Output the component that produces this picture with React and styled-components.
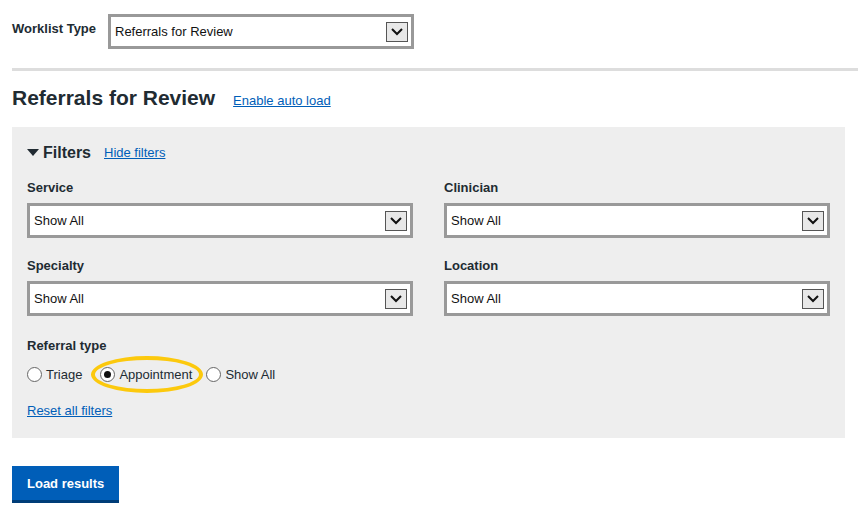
import React from 'react';
import styled, { createGlobalStyle } from 'styled-components';

const Global = createGlobalStyle`
  body { margin: 0; font-family: "Liberation Sans", Arial, sans-serif; color: #212b32; background: #fff; }
`;

const Page = styled.div`
  padding: 14px 0 0 12px;
  width: 846px;
`;

const TopRow = styled.div`
  display: flex;
  align-items: flex-start;
  gap: 12px;
  padding-bottom: 19px;
  border-bottom: 3px solid #ddd;
`;

const TopLabel = styled.div`
  font-size: 13px;
  font-weight: bold;
  padding-top: 7px;
  width: 84px;
  white-space: nowrap;
`;

const SelectBox = styled.div`
  box-sizing: border-box;
  width: ${p => p.$w}px;
  height: 35px;
  border: 3px solid #999;
  background: #fff;
  display: flex;
  align-items: center;
  justify-content: space-between;
  padding: 0 3px 0 4px;
  font-size: 13px;
  color: #111;
`;

const Arrow = styled.span`
  box-sizing: border-box;
  width: 22px;
  height: 20px;
  border: 1px solid #555;
  background: #e8e8e8;
  display: flex;
  align-items: center;
  justify-content: center;
`;

const HeadRow = styled.div`
  display: flex;
  align-items: baseline;
  gap: 18px;
  margin: 15px 0 17px;
`;

const H1 = styled.h1`
  margin: 0;
  font-size: 21px;
  font-weight: bold;
`;

const A = styled.a`
  color: #005eb8;
  text-decoration: underline;
  font-size: ${p => p.$size || 13}px;
  cursor: pointer;
`;

const Panel = styled.div`
  background: #eee;
  margin-right: 13px;
  padding: 17px 15px 19px 15px;
`;

const FiltersHead = styled.div`
  display: flex;
  align-items: baseline;
  gap: 13px;
  margin-bottom: 18px;
`;

const H2 = styled.h2`
  margin: 0;
  font-size: 16px;
  font-weight: bold;
  display: flex;
  align-items: center;
  gap: 4px;
`;

const Grid = styled.div`
  display: grid;
  grid-template-columns: 386px 386px;
  column-gap: 31px;
  row-gap: 20px;
`;

const Label = styled.div`
  font-size: 13px;
  font-weight: bold;
  margin-bottom: ${p => p.$mb || 8}px;
`;

const Fieldset = styled.div`
  margin-top: 22px;
`;

const Radios = styled.div`
  display: flex;
  align-items: center;
  gap: 10px;
`;

const Radio = styled.label`
  display: flex;
  align-items: center;
  gap: 4px;
  font-size: 13px;
  position: relative;
`;

const Dot = styled.span`
  box-sizing: border-box;
  width: 15px;
  height: 15px;
  border-radius: 50%;
  border: 1px solid #666;
  background: #fff;
  display: flex;
  align-items: center;
  justify-content: center;
  &::after {
    content: '';
    width: 7px;
    height: 7px;
    border-radius: 50%;
    background: ${p => (p.$on ? '#111' : 'transparent')};
  }
`;

const Highlight = styled.span`
  position: absolute;
  left: -9px;
  top: -11px;
  right: -11px;
  bottom: -11px;
  border: 4px solid #fcc90d;
  border-radius: 50%;
  pointer-events: none;
`;

const ResetRow = styled.div`
  margin-top: 19px;
`;

const Button = styled.button`
  margin-top: 28px;
  background: #005eb8;
  color: #fff;
  border: none;
  border-bottom: 3px solid #003d78;
  font-family: inherit;
  font-size: 13px;
  font-weight: bold;
  height: 37px;
  padding: 0 15px;
  cursor: pointer;
`;

const Chevron = () => (
  <svg width="14" height="10" viewBox="0 0 14 10">
    <path d="M2 2 L7 7 L12 2" fill="none" stroke="#111" strokeWidth="2" />
  </svg>
);

const Select = ({ w, children }) => (
  <SelectBox $w={w}>
    <span>{children}</span>
    <Arrow><Chevron /></Arrow>
  </SelectBox>
);

const filters = [
  ['Service', 'Show All'],
  ['Clinician', 'Show All'],
  ['Specialty', 'Show All'],
  ['Location', 'Show All'],
];

const App = () => (
  <Page>
    <Global />
    <TopRow>
      <TopLabel>Worklist Type</TopLabel>
      <Select w={306}>Referrals for Review</Select>
    </TopRow>
    <HeadRow>
      <H1>Referrals for Review</H1>
      <A>Enable auto load</A>
    </HeadRow>
    <Panel>
      <FiltersHead>
        <H2>
          <svg width="12" height="8" viewBox="0 0 12 8"><path d="M0 0 H12 L6 7 Z" fill="#212b32" /></svg>
          Filters
        </H2>
        <A>Hide filters</A>
      </FiltersHead>
      <Grid>
        {filters.map(([label, value]) => (
          <div key={label}>
            <Label>{label}</Label>
            <Select w={386}>{value}</Select>
          </div>
        ))}
      </Grid>
      <Fieldset>
        <Label $mb={14}>Referral type</Label>
        <Radios>
          <Radio><Dot />Triage</Radio>
          <Radio style={{ marginLeft: 8 }}><Dot $on />Appointment<Highlight /></Radio>
          <Radio style={{ marginLeft: 4 }}><Dot />Show All</Radio>
        </Radios>
      </Fieldset>
      <ResetRow><A>Reset all filters</A></ResetRow>
    </Panel>
    <Button>Load results</Button>
  </Page>
);

export default App;
